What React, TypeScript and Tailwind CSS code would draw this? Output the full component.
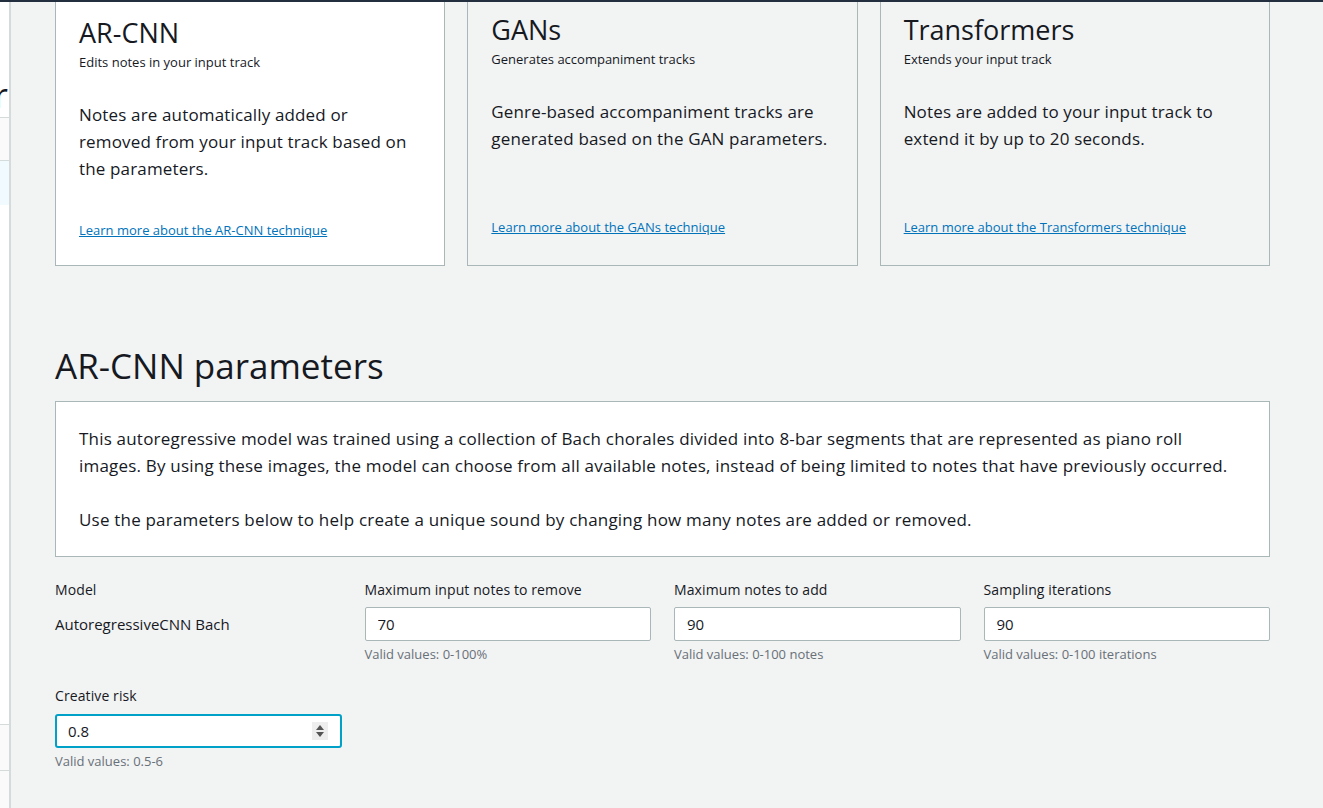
import React from "react";

const cards = [
  {
    title: "AR-CNN",
    sub: "Edits notes in your input track",
    body: "Notes are automatically added or removed from your input track based on the parameters.",
    link: "Learn more about the AR-CNN technique",
    selected: true,
  },
  {
    title: "GANs",
    sub: "Generates accompaniment tracks",
    body: "Genre-based accompaniment tracks are generated based on the GAN parameters.",
    link: "Learn more about the GANs technique",
    selected: false,
  },
  {
    title: "Transformers",
    sub: "Extends your input track",
    body: "Notes are added to your input track to extend it by up to 20 seconds.",
    link: "Learn more about the Transformers technique",
    selected: false,
  },
];

const fields = [
  { label: "Maximum input notes to remove", value: "70", hint: "Valid values: 0-100%" },
  { label: "Maximum notes to add", value: "90", hint: "Valid values: 0-100 notes" },
  { label: "Sampling iterations", value: "90", hint: "Valid values: 0-100 iterations" },
];

function App() {
  const [risk, setRisk] = React.useState("0.8");
  return (
    <div
      className="flex flex-col w-[1323px] h-[808px] overflow-hidden bg-[#f2f3f3] text-[#16191f]"
      style={{ fontFamily: '"Open Sans", "Noto Sans", sans-serif' }}
    >
      <div className="h-[2px] bg-[#232f3e] shrink-0" />
      <div className="flex flex-1 min-h-0">
        {/* side panel, mostly scrolled away */}
        <div className="flex flex-col w-[11px] shrink-0 bg-white border-r-2 border-[#d5dbdb] overflow-hidden">
          <div className="flex justify-end h-[115px] pt-[73px]">
            <span className="text-[34px] leading-[40px] whitespace-nowrap pr-[1px]">Composer</span>
          </div>
          <div className="h-[43px] bg-[#fafafa] border-t border-[#d5dbdb]" />
          <div className="h-[45px] bg-[#f1faff] border-t border-[#d5dbdb]" />
          <div className="flex-1" />
          <div className="h-[46px] bg-[#fafafa] border-t border-[#d5dbdb]" />
          <div className="h-[38px] bg-[#fafafa] border-t border-[#d5dbdb]" />
        </div>

        <div className="flex-1 pl-[44px] pr-[53px]">
          <div className="grid grid-cols-3 gap-x-[22px]">
            {cards.map((c, i) => (
              <div
                key={i}
                className={`flex flex-col h-[264px] border border-t-0 border-[#aab7b8] px-[23px] ${
                  c.selected ? "bg-white pt-[15px] pb-[26px]" : "bg-[#f2f3f3] pt-[12px] pb-[29px]"
                }`}
              >
                <h2 className="text-[27px] leading-[32px]">{c.title}</h2>
                <p className="text-[13px] leading-[18px] mt-[4px]">{c.sub}</p>
                <p className="text-[17px] leading-[27px] tracking-[0.15px] mt-[30px] pr-[2px]">{c.body}</p>
                <a href="#" className="mt-auto text-[13px] leading-[18px] text-[#0073bb] underline">
                  {c.link}
                </a>
              </div>
            ))}
          </div>

          <h1 className="text-[35px] leading-[40px] mt-[80px]">AR-CNN parameters</h1>

          <div className="mt-[15px] bg-white border border-[#aab7b8] px-[23px] pt-[23px] pb-[23px] text-[17px] leading-[27px] tracking-[0.2px]">
            <p>
              This autoregressive model was trained using a collection of Bach chorales divided into 8-bar segments
              that are represented as piano roll images. By using these images, the model can choose from all
              available notes, instead of being limited to notes that have previously occurred.
            </p>
            <p className="mt-[27px]">
              Use the parameters below to help create a unique sound by changing how many notes are added or removed.
            </p>
          </div>

          <div className="grid grid-cols-4 gap-x-[23px] mt-[23px]">
            <div className="flex flex-col">
              <span className="text-[14px] leading-[20px] tracking-[0.1px]">Model</span>
              <span className="text-[15px] leading-[34px] mt-[7px]">AutoregressiveCNN Bach</span>
            </div>
            {fields.map((f, i) => (
              <div key={i} className="flex flex-col">
                <span className="text-[14px] leading-[20px] tracking-[0.1px]">{f.label}</span>
                <input
                  defaultValue={f.value}
                  className="mt-[7px] h-[34px] bg-white border border-[#aab7b8] rounded-[2px] px-[12px] text-[15px] outline-none"
                />
                <span className="text-[13px] leading-[16px] mt-[5px] text-[#687078]">{f.hint}</span>
              </div>
            ))}
          </div>

          <div className="grid grid-cols-4 gap-x-[23px] mt-[24px]">
            <div className="flex flex-col">
              <span className="text-[14px] leading-[20px] tracking-[0.1px]">Creative risk</span>
              <div className="mt-[8px] h-[34px] flex items-center bg-white border-2 border-[#00a1c9] rounded-[3px] pl-[11px] pr-[12px]">
                <input
                  value={risk}
                  onChange={(e) => setRisk(e.target.value)}
                  className="flex-1 min-w-0 text-[15px] outline-none bg-transparent"
                />
                <div className="flex flex-col items-center justify-center w-[16px] h-[18px] bg-[#eeeeee] gap-[2px]">
                  <svg width="8" height="5" viewBox="0 0 8 5">
                    <path d="M4 0 L8 5 L0 5 Z" fill="#555" />
                  </svg>
                  <svg width="8" height="5" viewBox="0 0 8 5">
                    <path d="M0 0 L8 0 L4 5 Z" fill="#555" />
                  </svg>
                </div>
              </div>
              <span className="text-[13px] leading-[16px] mt-[5px] text-[#687078]">Valid values: 0.5-6</span>
            </div>
          </div>
        </div>
      </div>
    </div>
  );
}

export default App;
